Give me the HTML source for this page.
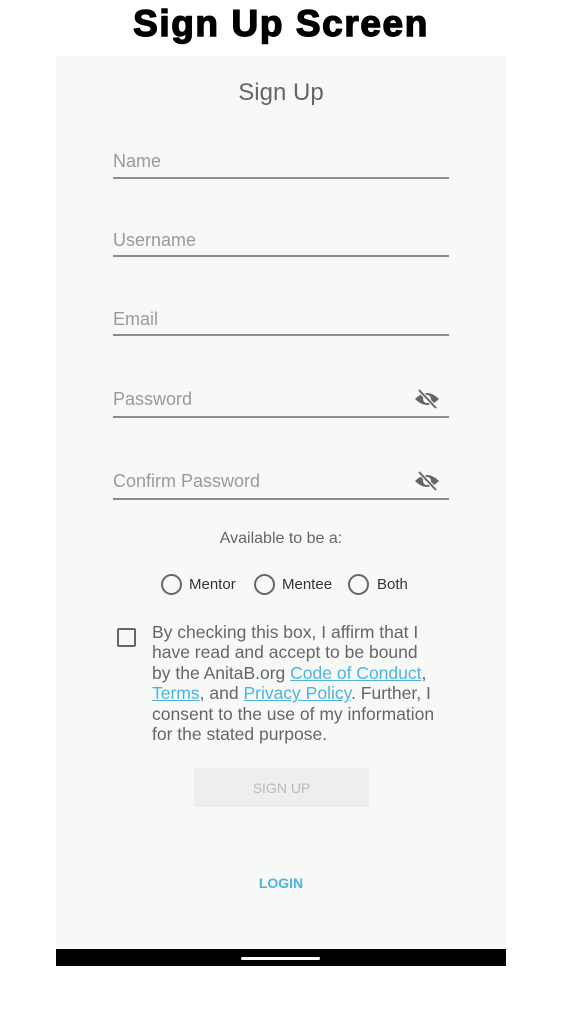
<!DOCTYPE html>
<html><head><meta charset="utf-8"><style>
*{margin:0;padding:0;box-sizing:border-box}
body{width:562px;height:1023px;background:#fff;position:relative;font-family:"Liberation Sans",sans-serif;overflow:hidden}
.a{position:absolute}
.h1{left:0;width:562px;top:3px;text-align:center;font-size:37px;font-weight:900;letter-spacing:1.6px;color:#000;-webkit-text-stroke:1.4px #000}
.panel{left:56px;top:56px;width:450px;height:893px;background:#f6f9f6}
.bar{left:56px;top:949px;width:450px;height:17px;background:#000}
.ind{left:241px;top:957px;width:79px;height:3px;background:#fff;border-radius:2px}
.lab{left:113px;font-size:18px;color:#9a9a9a}
.line{left:113px;width:336px;height:1.5px;background:#8c8c8c}
.eye{left:414px;width:26px;height:22px}
.r{width:21px;height:21px;border:2px solid #666;border-radius:50%;top:574px}
.rt{top:576px;font-size:15px;color:#333}
p{left:152px;top:622px;width:320px;font-size:17.5px;line-height:20.4px;color:#666;white-space:nowrap}
p span{color:#4fb3e0;text-decoration:underline}
</style></head><body>
<div class="a h1">Sign Up Screen</div>
<div class="a panel"></div>
<div class="a" style="left:0;width:562px;top:79px;text-align:center;font-size:24px;color:#666">Sign Up</div>

<div class="a lab" style="top:151px">Name</div><div class="a line" style="top:177px"></div>
<div class="a lab" style="top:230px">Username</div><div class="a line" style="top:255px"></div>
<div class="a lab" style="top:309px">Email</div><div class="a line" style="top:334px"></div>
<div class="a lab" style="top:389px">Password</div><div class="a line" style="top:416px"></div>
<div class="a lab" style="top:471px">Confirm Password</div><div class="a line" style="top:498px"></div>

<svg class="a eye" style="top:388px" viewBox="0 0 26 22"><path d="M1 11 Q13 -1 25 11 Q13 23 1 11Z" fill="#666"/><circle cx="13" cy="11" r="4" fill="#f6f9f6"/><line x1="5" y1="2" x2="22" y2="20" stroke="#f6f9f6" stroke-width="4"/><line x1="5" y1="2" x2="22" y2="20" stroke="#666" stroke-width="2"/></svg>
<svg class="a eye" style="top:470px" viewBox="0 0 26 22"><path d="M1 11 Q13 -1 25 11 Q13 23 1 11Z" fill="#666"/><circle cx="13" cy="11" r="4" fill="#f6f9f6"/><line x1="5" y1="2" x2="22" y2="20" stroke="#f6f9f6" stroke-width="4"/><line x1="5" y1="2" x2="22" y2="20" stroke="#666" stroke-width="2"/></svg>

<div class="a" style="left:0;width:562px;top:530px;text-align:center;font-size:16px;color:#666">Available to be a:</div>
<div class="a r" style="left:161px"></div><div class="a rt" style="left:189px">Mentor</div>
<div class="a r" style="left:254px"></div><div class="a rt" style="left:282px">Mentee</div>
<div class="a r" style="left:348px"></div><div class="a rt" style="left:377px">Both</div>

<div class="a" style="left:117px;top:628px;width:19px;height:19px;border:2px solid #666;border-radius:2px"></div>
<p class="a">By checking this box, I affirm that I<br>have read and accept to be bound<br>by the AnitaB.org <span>Code of Conduct</span>,<br><span>Terms</span>, and <span>Privacy Policy</span>. Further, I<br>consent to the use of my information<br>for the stated purpose.</p>

<div class="a" style="left:194px;top:768px;width:175px;height:39px;background:#eeeeee;color:#bbb;font-size:14px;text-align:center;line-height:41px">SIGN UP</div>
<div class="a" style="left:0;width:562px;top:875px;text-align:center;font-size:14px;font-weight:bold;color:#4fb3e0">LOGIN</div>

<div class="a bar"></div><div class="a ind"></div>
</body></html>
